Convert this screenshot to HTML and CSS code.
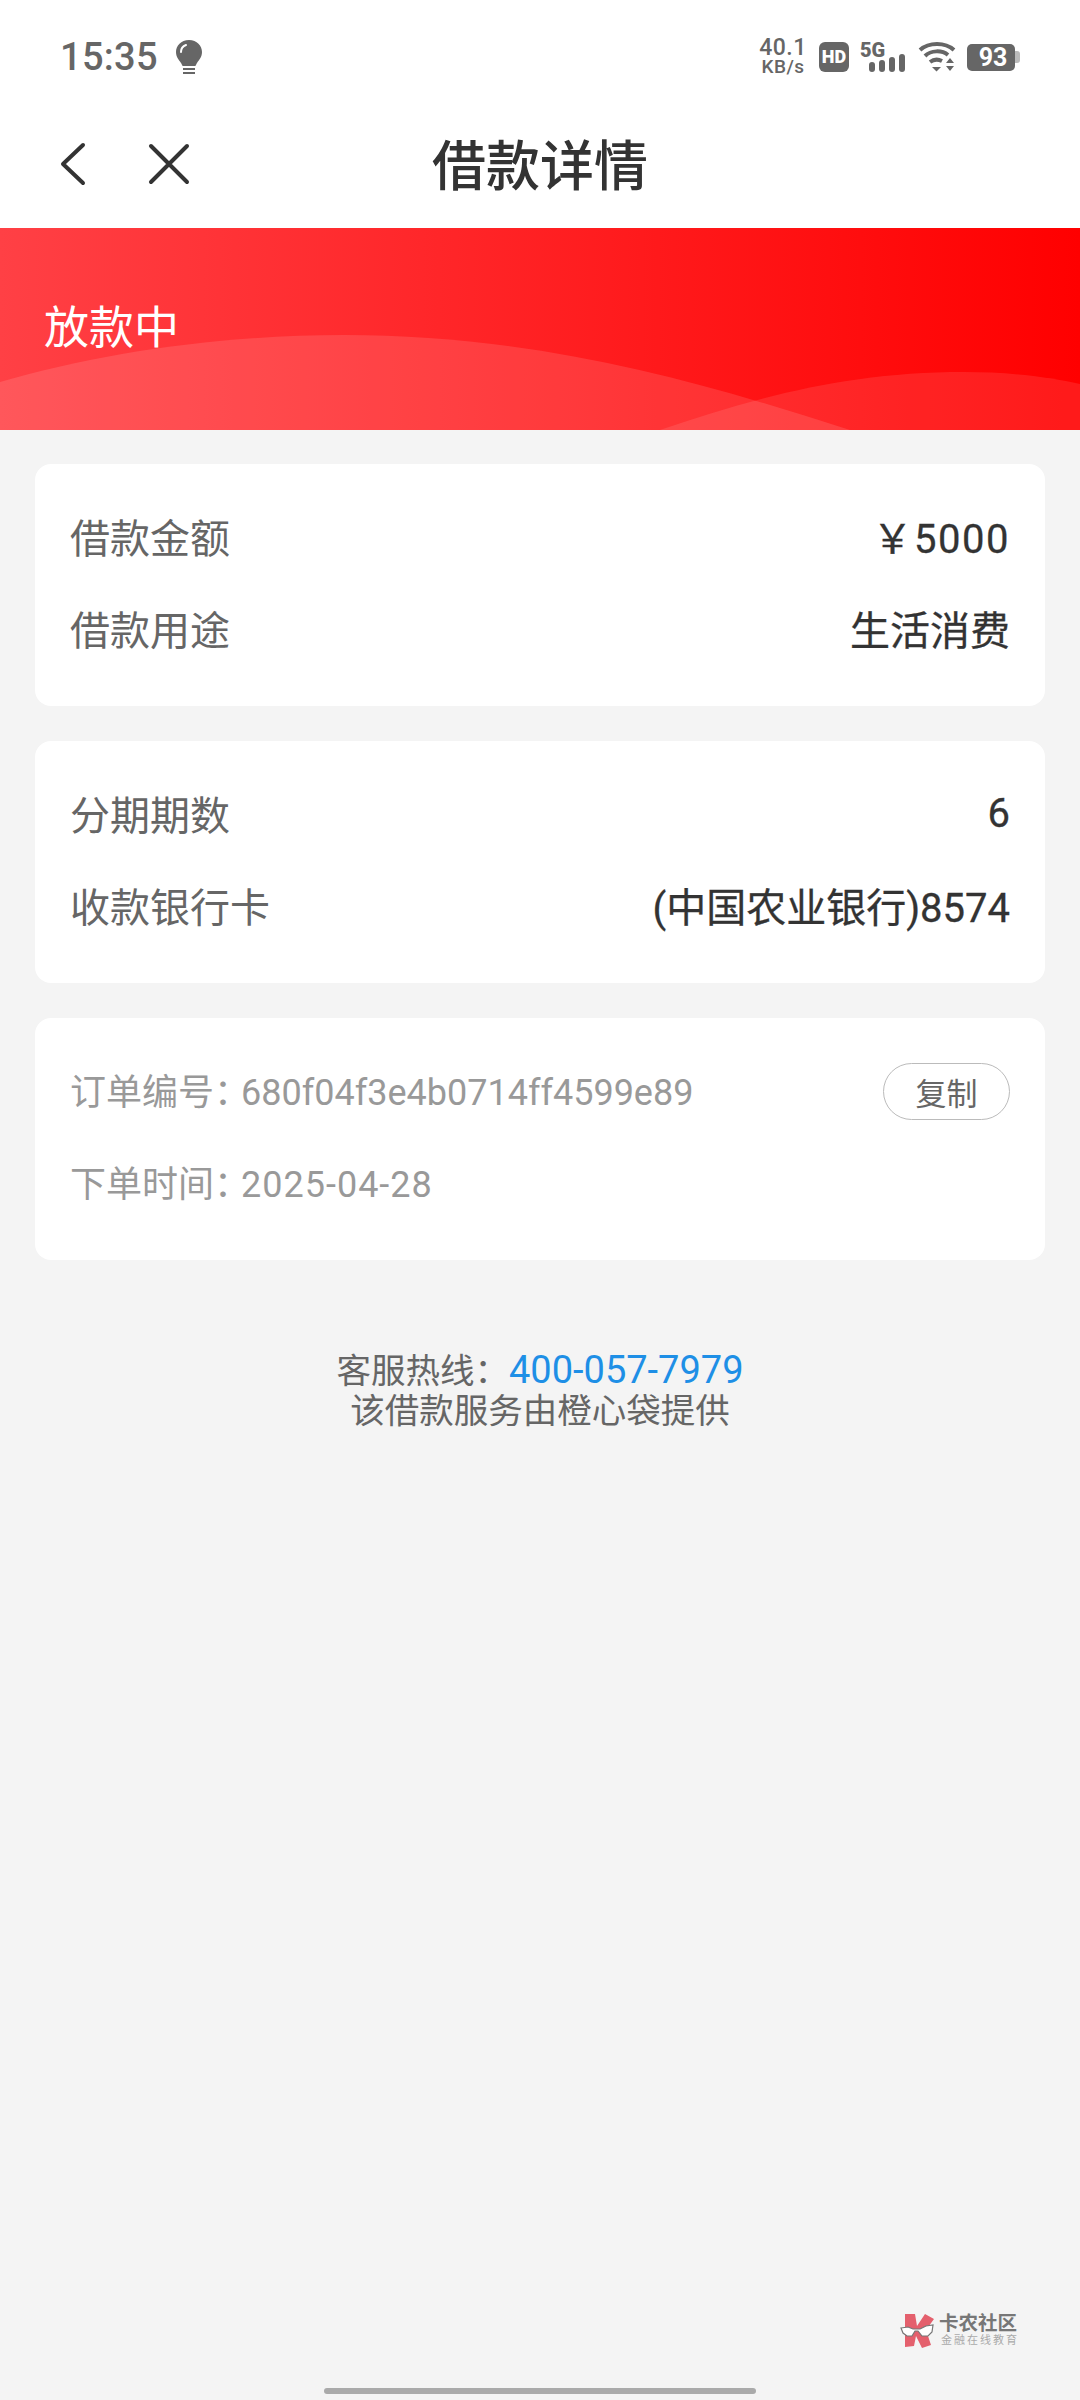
FILE: index.html
```html
<!DOCTYPE html>
<html lang="zh-CN">

<head>
    <meta charset="UTF-8">
    <meta name="viewport" content="width=device-width, initial-scale=1.0">
    <title>借款详情</title>
    <link rel="stylesheet" href="styles.css">
</head>

<body>
    <div class="status-bar">
        <div class="status-left">
            <span class="clock">15:35</span>
            <svg class="bulb" width="30" height="36" viewBox="0 0 30 36">
                <path d="M15 1C7 1 2 7 2 13c0 5 3 8 5 11 1 1 1 3 2 3h12c1 0 1-2 2-3 2-3 5-6 5-11C28 7 23 1 15 1z" fill="#666"/>
                <path d="M7 13c0-4 2-6 5-7" stroke="#fff" stroke-width="2" fill="none" stroke-linecap="round"/>
                <rect x="9" y="29" width="12" height="2" fill="#666"/>
                <rect x="9" y="33" width="12" height="2" fill="#666"/>
            </svg>
        </div>
        <div class="status-right">
            <div class="speed"><span>40.1</span><span>KB/s</span></div>
            <div class="hd">HD</div>
            <div class="signal">
                <span class="five-g">5G</span>
                <svg width="36" height="18" viewBox="0 0 36 18">
                    <rect x="0" y="8" width="6" height="10" rx="3" fill="#666"/>
                    <rect x="10" y="6" width="6" height="12" rx="3" fill="#666"/>
                    <rect x="20" y="3" width="6" height="15" rx="3" fill="#666"/>
                    <rect x="30" y="0" width="6" height="18" rx="3" fill="#666"/>
                </svg>
            </div>
            <svg class="wifi" width="38" height="30" viewBox="0 0 38 30">
                <path d="M2 8C11 0 27 0 36 8" stroke="#666" stroke-width="4" fill="none"/>
                <path d="M7 14C13 8 24 8 30 13" stroke="#666" stroke-width="4" fill="none"/>
                <path d="M12 20c4-3 8-3 12-1" stroke="#666" stroke-width="4" fill="none"/>
                <path d="M14 25h9l-4.500 4.500z" fill="#666"/>
                <path d="M32 16l4 5h-8zM28 24h8l-4 5z" fill="#666"/>
            </svg>
            <div class="battery"><span class="battery-body">93</span><span class="battery-tip"></span></div>
        </div>
    </div>

    <div class="nav-bar">
        <svg class="nav-back" width="26" height="44" viewBox="0 0 26 44">
            <path d="M23 3L3 22l20 19" stroke="#333" stroke-width="4" fill="none" stroke-linecap="round" stroke-linejoin="round"/>
        </svg>
        <svg class="nav-close" width="42" height="42" viewBox="0 0 42 42">
            <path d="M3 3l36 36M39 3L3 39" stroke="#333" stroke-width="4" fill="none" stroke-linecap="round"/>
        </svg>
        <h1>借款详情</h1>
    </div>

    <div class="banner">
        <svg class="banner-waves" width="1080" height="202" viewBox="0 0 1080 202" preserveAspectRatio="none">
            <path d="M0 154C100 125 220 107 344 107C530 107 690 150 850 202H0z" fill="#fff" fill-opacity="0.12"/>
            <path d="M660 202C760 168 850 144 964 144C1010 144 1050 149 1080 156V202z" fill="#fff" fill-opacity="0.1"/>
        </svg>
        <span class="banner-text">放款中</span>
    </div>

    <div class="card card-first">
        <div class="row"><span class="label">借款金额</span><span class="value value-money">￥5000</span></div>
        <div class="row"><span class="label">借款用途</span><span class="value">生活消费</span></div>
    </div>

    <div class="card">
        <div class="row"><span class="label">分期期数</span><span class="value">6</span></div>
        <div class="row"><span class="label">收款银行卡</span><span class="value">(中国农业银行)8574</span></div>
    </div>

    <div class="card card-order">
        <div class="row">
            <span class="order-text"><span class="colon">订单编号：</span>680f04f3e4b0714ff4599e89</span>
            <button class="copy-btn">复制</button>
        </div>
        <div class="row">
            <span class="order-text"><span class="colon">下单时间：</span><span class="order-date">2025-04-28</span></span>
        </div>
    </div>

    <div class="service">
        <p>客服热线：<span class="phone">400-057-7979</span></p>
        <p>该借款服务由橙心袋提供</p>
    </div>

    <div class="watermark">
        <svg width="34" height="34" viewBox="0 0 34 34">
            <path d="M5 0h10l2 12L25 0l9 5-8 11 5 15-9 3-6-12-2 10-9 1z" fill="#e4606d"/>
            <path d="M1 14l7-1 5 2 7 0 6-3 7-1-1 7-4 4h-6l-4-5-3 0-3 5H7l-4-3z" fill="#fff" stroke="#777" stroke-width="1.200"/>
        </svg>
        <div class="watermark-text">
            <span class="watermark-name">卡农社区</span>
            <span class="watermark-sub">金融在线教育</span>
        </div>
    </div>

    <div class="home-bar"></div>
</body>

</html>
```
FILE: styles.css
```css
* {
    box-sizing: border-box;
}

html,
body {
    margin: 0;
    padding: 0;
}

body {
    width: 1080px;
    height: 2400px;
    background-color: #f4f4f4;
    font-family: "Roboto", "Noto Sans CJK SC", sans-serif;
    position: relative;
    overflow: hidden;
}

.status-bar {
    height: 108px;
    background-color: #fff;
    display: flex;
    justify-content: space-between;
    align-items: center;
    padding: 6px 60px 0 60px;
}

.status-left {
    display: flex;
    align-items: center;
    gap: 16px;
}

.clock {
    font-family: "Roboto", sans-serif;
    font-size: 38px;
    font-weight: 500;
    letter-spacing: 0.3px;
    color: #666;
}

.status-right {
    display: flex;
    align-items: center;
    color: #666;
}

.speed {
    display: flex;
    flex-direction: column;
    align-items: center;
    width: 44px;
    font-size: 19px;
    line-height: 18px;
    font-weight: 500;
    letter-spacing: 0.5px;
}

.speed span:first-child {
    font-size: 23px;
    line-height: 20px;
}

.hd {
    width: 30px;
    height: 30px;
    margin-left: 14px;
    background-color: #666;
    border-radius: 6px;
    color: #fff;
    font-size: 18px;
    line-height: 30px;
    font-weight: 900;
    text-align: center;
}

.signal {
    position: relative;
    width: 45px;
    height: 30px;
    margin-left: 11px;
}

.signal svg {
    position: absolute;
    right: 0;
    bottom: 0;
}

.five-g {
    position: absolute;
    left: 0;
    top: -1px;
    font-size: 20px;
    font-weight: 900;
    line-height: 18px;
}

.wifi {
    margin-left: 13px;
}

.battery {
    display: flex;
    align-items: center;
    margin-left: 11px;
}

.battery-body {
    width: 48px;
    height: 27px;
    background-color: #666;
    border-radius: 5px;
    color: #fff;
    font-size: 25px;
    line-height: 27px;
    font-weight: 700;
    text-align: center;
    padding-left: 4px;
}

.battery-tip {
    width: 5px;
    height: 12px;
    background-color: #bbb;
    border-radius: 0 3px 3px 0;
}

.nav-bar {
    height: 120px;
    background-color: #fff;
    position: relative;
    display: flex;
    align-items: center;
    padding: 0 0 8px 60px;
}

.nav-close {
    margin-left: 62px;
}

h1 {
    position: absolute;
    left: 0;
    right: 0;
    top: 0;
    bottom: 12px;
    margin: 0;
    display: flex;
    align-items: center;
    justify-content: center;
    font-size: 54px;
    font-weight: 500;
    color: #333;
}

.banner {
    height: 202px;
    position: relative;
    background: linear-gradient(90deg, #ff4045 0%, #ff0000 100%);
    display: flex;
    align-items: center;
    padding: 0 0 10px 44px;
}

.banner-waves {
    position: absolute;
    left: 0;
    top: 0;
}

.banner-text {
    position: relative;
    font-size: 45px;
    color: #fff;
}

.card {
    width: 1010px;
    height: 242px;
    margin: 35px 35px 0 35px;
    padding: 42px 35px 0 35px;
    background-color: #fff;
    border-radius: 16px;
    display: flex;
    flex-direction: column;
    gap: 32px;
}

.card-first {
    margin-top: 34px;
}

.card-order {
    padding-top: 43px;
}

.row {
    height: 60px;
    display: flex;
    justify-content: space-between;
    align-items: center;
}

.label {
    font-size: 40px;
    color: #666;
}

.value {
    font-size: 40px;
    color: #333;
    -webkit-text-stroke: 0.3px #333;
}

.value-money {
    letter-spacing: 1.5px;
}

.order-text {
    font-size: 36px;
    color: #999;
    position: relative;
    top: -2px;
}

.order-date {
    letter-spacing: 1px;
}

.colon {
    margin-right: -9px;
}

.copy-btn {
    width: 127px;
    height: 57px;
    padding: 0;
    background-color: #fff;
    border: 1px solid #bbb;
    border-radius: 29px;
    font-family: inherit;
    font-size: 31px;
    color: #666;
}

.service {
    margin-top: 90px;
    text-align: center;
    font-size: 34.5px;
    line-height: 40px;
    color: #666;
}

.service p {
    margin: 0;
}

.phone {
    font-size: 38px;
    color: #1e8fe6;
}

.watermark {
    position: absolute;
    left: 900px;
    top: 2313px;
    display: flex;
    align-items: center;
    gap: 5px;
}

.watermark-text {
    display: flex;
    flex-direction: column;
    color: #777;
}

.watermark-name {
    font-size: 19.5px;
    line-height: 21px;
    font-weight: 700;
}

.watermark-sub {
    font-size: 11px;
    line-height: 14px;
    letter-spacing: 2px;
    padding-left: 2px;
    color: #aaa;
}

.home-bar {
    position: absolute;
    left: 324px;
    top: 2388px;
    width: 432px;
    height: 6px;
    border-radius: 3px;
    background-color: #aaa;
}
```
